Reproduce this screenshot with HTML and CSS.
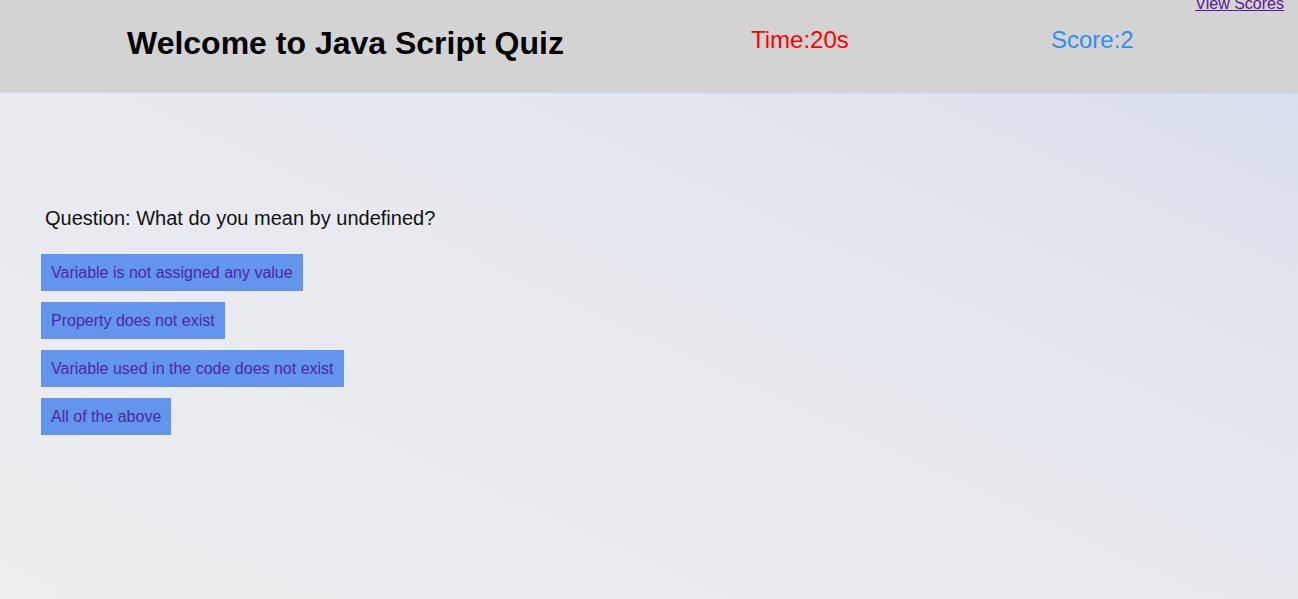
FILE: index.html
```html
<!DOCTYPE html>
<html lang="en">
<head>
<meta charset="utf-8">
<title>Java Script Quiz</title>
<link rel="stylesheet" href="styles.css">
</head>
<body>
<header class="topbar">
  <h1 class="title">Welcome to Java Script Quiz</h1>
  <div class="timer">Time:20s</div>
  <div class="score">Score:2</div>
  <a class="view-scores" href="#">View Scores</a>
</header>
<main class="quiz">
  <p class="question">Question: What do you mean by undefined?</p>
  <div class="choices">
    <button class="choice">Variable is not assigned any value</button>
    <button class="choice">Property does not exist</button>
    <button class="choice">Variable used in the code does not exist</button>
    <button class="choice">All of the above</button>
  </div>
</main>
</body>
</html>
```

FILE: styles.css
```css
html, body {
  margin: 0;
  padding: 0;
  height: 100%;
}
body {
  font-family: "Liberation Sans", Arial, sans-serif;
  background: linear-gradient(to top right, #eeeef0 0%, #e7e9ef 50%, #d6dde9 100%);
  min-height: 599px;
  overflow: hidden;
}
.topbar {
  position: relative;
  height: 92px;
  background: #d3d3d3;
  display: flex;
  align-items: flex-start;
  padding-left: 127px;
  box-sizing: border-box;
  box-shadow: 0 1px 1px rgba(0,0,0,0.06);
}
.title {
  margin: 0;
  padding-top: 25px;
  font-size: 32px;
  font-weight: bold;
  line-height: 37px;
  color: #000;
  width: 437px;
  white-space: nowrap;
}
.timer {
  margin-left: 187px;
  padding-top: 26px;
  font-size: 24px;
  line-height: 28px;
  color: #ff0000;
  width: 113px;
  white-space: nowrap;
}
.score {
  margin-left: 187px;
  padding-top: 26px;
  font-size: 24px;
  line-height: 28px;
  color: #2f8ff0;
  white-space: nowrap;
}
.view-scores {
  position: absolute;
  top: -5px;
  right: 14px;
  font-size: 16px;
  line-height: 18px;
  color: #551a8b;
}
.quiz {
  padding: 115px 0 0 41px;
}
.question {
  margin: 0 0 24px 4px;
  font-size: 20px;
  line-height: 23px;
  color: #111;
}
.choices {
  display: flex;
  flex-direction: column;
  align-items: flex-start;
  gap: 11px;
}
.choice {
  font-family: "Liberation Sans", Arial, sans-serif;
  font-size: 16px;
  line-height: 19px;
  padding: 9px 10px;
  border: none;
  border-radius: 0;
  background: #6495ed;
  color: #4a2a9e;
  cursor: pointer;
}
```
